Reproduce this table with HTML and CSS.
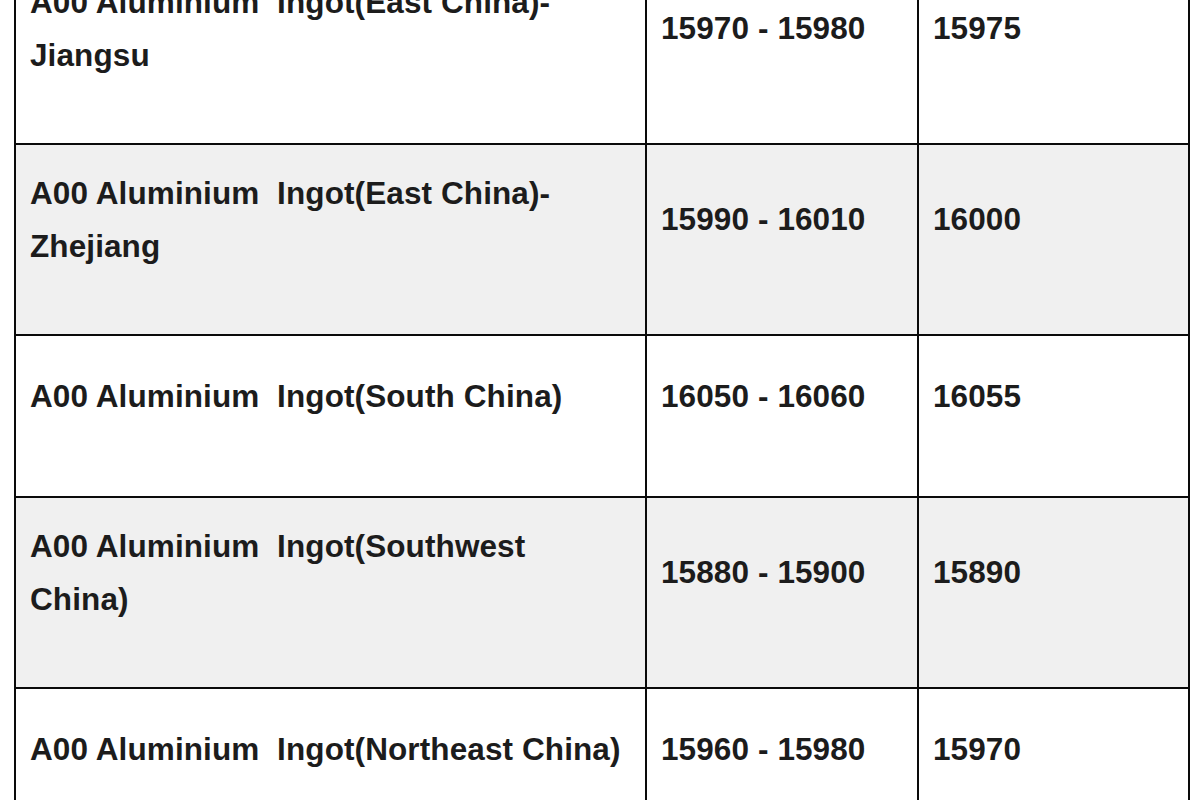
FILE: index.html
```html
<!DOCTYPE html>
<html>
<head>
<meta charset="utf-8">
<link rel="stylesheet" href="styles.css">
</head>
<body>
<div class="page">
<table class="prices">
  <colgroup><col class="c1"><col class="c2"><col class="c3"></colgroup>
  <tr class="two">
    <td class="name">A00 Aluminium&nbsp;&nbsp;Ingot(East China)-<br>Jiangsu</td>
    <td class="num">15970 - 15980</td>
    <td class="num">15975</td>
  </tr>
  <tr class="two alt">
    <td class="name">A00 Aluminium&nbsp;&nbsp;Ingot(East China)-<br>Zhejiang</td>
    <td class="num">15990 - 16010</td>
    <td class="num">16000</td>
  </tr>
  <tr class="one">
    <td class="name">A00 Aluminium&nbsp;&nbsp;Ingot(South&nbsp;China)</td>
    <td class="num">16050 - 16060</td>
    <td class="num">16055</td>
  </tr>
  <tr class="two alt">
    <td class="name">A00 Aluminium&nbsp;&nbsp;Ingot(Southwest<br>China)</td>
    <td class="num">15880 - 15900</td>
    <td class="num">15890</td>
  </tr>
  <tr class="one">
    <td class="name">A00 Aluminium&nbsp;&nbsp;Ingot(Northeast China)</td>
    <td class="num">15960 - 15980</td>
    <td class="num">15970</td>
  </tr>
</table>
</div>
</body>
</html>
```

FILE: styles.css
```css
html, body {
  margin: 0;
  padding: 0;
  background: #ffffff;
}

.page {
  width: 1200px;
  height: 800px;
  overflow: hidden;
}

.prices {
  margin: -48px 0 0 14px;
  width: 1174px;
  border-collapse: collapse;
  table-layout: fixed;
  font-family: "Liberation Sans", Arial, sans-serif;
  font-weight: bold;
  font-size: 31.5px;
  line-height: 53px;
  letter-spacing: 0.1px;
  color: #1c1c1c;
}

.c1 { width: 631px; }
.c2 { width: 272px; }
.c3 { width: 271px; }

.prices td {
  border: 2px solid #0a0a0a;
  white-space: nowrap;
  padding: 2px 14px 42px 14px;
  vertical-align: middle;
}

.prices tr.alt td {
  background: #f0f0f0;
}

.prices tr.two td.name {
  vertical-align: top;
  padding: 22px 14px 61px 14px;
}

.prices tr.one td.name {
  vertical-align: top;
  padding: 34px 14px 73px 14px;
}
```
